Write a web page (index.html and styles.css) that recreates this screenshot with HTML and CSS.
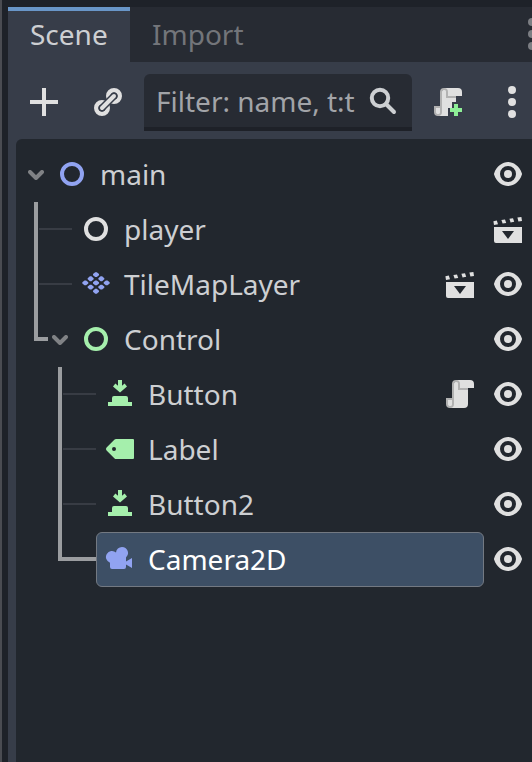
FILE: index.html
```html
<!DOCTYPE html>
<html lang="en">
<head>
<meta charset="utf-8">
<title>Scene</title>
<link rel="stylesheet" href="styles.css">
</head>
<body>
<svg class="defs" aria-hidden="true">
  <symbol id="eye" viewBox="0 0 16 16"><path fill="#e0e0e0" d="M8 2C5.443 2 2.209 3.948 1.045 7.705a1 1 0 0 0-.006.572C2.163 12.211 5.5 14 8 14s5.836-1.789 6.961-5.723a1 1 0 0 0 0-.555C13.861 3.935 10.557 2 8 2zm0 2a4 4 0 0 1 4 4 4 4 0 0 1-4 4 4 4 0 0 1-4-4 4 4 0 0 1 4-4zm0 2a2 2 0 0 0-2 2 2 2 0 0 0 2 2 2 2 0 0 0 2-2 2 2 0 0 0-2-2z"/></symbol>
  <symbol id="ring" viewBox="0 0 16 16"><circle cx="8" cy="8" r="5" fill="none" stroke="currentColor" stroke-width="2"/></symbol>
  <symbol id="clap" viewBox="0 0 16 16"><path fill="#e0e0e0" fill-rule="evenodd" d="M1 7h14v8H2a1 1 0 0 1-1-1zM5 9l3 4 3-4zM.7 4.1l1.7-.3.6 1.8L1 6zM4.7 3.5l1.8-.3.6 1.8-1.8.3zM8.7 2.9l1.8-.3.6 1.8-1.8.3zM12.7 2.3l2-.3.3 2-1.8.2z"/></symbol>
  <symbol id="script" viewBox="0 0 16 16"><path fill="#e0e0e0" d="M6 1v1a1 1 0 0 0-1 1v10H4v-2H2v2a2 2 0 0 0 1 2h7a2 2 0 0 0 2-2V5h3V3a2 2 0 0 0-2-2z"/><path fill="#b2b2b2" fill-rule="evenodd" d="M6 1a2 2 0 0 0-2 2v7H1v3a2 2 0 0 0 4 0V3a1 1 0 0 1 2 0v3h5V5H8V3a2 2 0 0 0-2-2zM2 11h2v2a1 1 0 0 1-2 0z"/><path fill="#e0e0e0" d="M2 11h2v2a1 1 0 0 1-2 0zM5 3a1 1 0 0 1 2 0v3H5z"/></symbol>
  <symbol id="button" viewBox="0 0 16 16"><path fill="#a5efac" d="M2 14v-2h2v-2a1 1 0 0 1 1-1h6a1 1 0 0 1 1 1v2h2v2zM7 1h2v2.900l1.300-1.200 1.200 1.600L8 7.200 4.500 4.300l1.200-1.600L7 3.900z"/></symbol>
  <symbol id="chevron" viewBox="0 0 16 10"><path d="M2 2l6 6 6-6" fill="none" stroke="#808285" stroke-width="4" stroke-linecap="round" stroke-linejoin="round"/></symbol>
</svg>

<div class="dock">
  <header class="tabs">
    <div class="tab active">Scene</div>
    <div class="tab">Import</div>
    <svg class="tabmenu" viewBox="0 0 8 32" fill="#7c7e83"><circle cx="4" cy="4" r="4"/><circle cx="4" cy="16" r="4"/><circle cx="4" cy="28" r="4"/></svg>
  </header>

  <div class="panel">
    <div class="toolbar">
      <svg class="icon" viewBox="0 0 16 16"><path fill="#e0e0e0" d="M7 1h2v6h6v2H9v6H7V9H1V7h6z"/></svg>
      <svg class="icon link" viewBox="0 0 16 16" fill="none"><g stroke="#e0e0e0" stroke-width="2.200"><circle cx="5" cy="11" r="2.900"/><circle cx="11" cy="5" r="2.900"/></g><path class="gap" d="M5 11l6-6"/><path d="M5 11l6-6" stroke="#e0e0e0" stroke-width="2" stroke-linecap="round"/></svg>
      <div class="filter">
        <span>Filter: name, t:t</span>
        <svg class="icon" viewBox="0 0 16 16" fill="none" stroke="#cdcfd2" stroke-width="2"><circle cx="6" cy="6" r="4.100"/><path d="M9 9l4 4" stroke-linecap="round"/></svg>
      </div>
      <svg class="icon attach" viewBox="0 0 16 16"><use href="#script"/><path class="cutout" d="M10 8h6v8h-6v-1H8v-4h2z"/><path fill="#8eef97" d="M11 9h2v2h2v2h-2v2h-2v-2H9v-2h2z"/></svg>
      <svg class="icon more" viewBox="0 0 16 16" fill="#e0e0e0"><circle cx="8" cy="2" r="2"/><circle cx="8" cy="8" r="2"/><circle cx="8" cy="14" r="2"/></svg>
    </div>

    <main class="tree">
      <div class="row root">
        <svg class="chevron"><use href="#chevron"/></svg>
        <svg class="icon blue"><use href="#ring"/></svg><span class="name">main</span>
        <svg class="icon"><use href="#eye"/></svg>
      </div>
      <div class="children outer">
        <div class="guide"></div>
        <div class="rows">
          <div class="row">
            <i class="branch"></i>
            <svg class="icon white"><use href="#ring"/></svg><span class="name">player</span>
            <svg class="icon"><use href="#clap"/></svg>
          </div>
          <div class="row">
            <i class="branch"></i>
            <svg class="icon blue" viewBox="0 0 16 16" fill="currentColor"><g id="tiles"><path id="tile" d="M7.600 2.100h.8l1.100.9v.6l-1.100.9h-.8l-1.100-.9V3z"/><use href="#tile" x="2.67" y="2.08"/><use href="#tile" x="5.34" y="4.16"/></g><use href="#tiles" x="-2.67" y="2.08"/><use href="#tiles" x="-5.34" y="4.16"/></svg><span class="name">TileMapLayer</span>
            <svg class="icon"><use href="#clap"/></svg>
            <svg class="icon"><use href="#eye"/></svg>
          </div>
          <div class="row parent">
            <svg class="chevron"><use href="#chevron"/></svg>
            <svg class="icon green"><use href="#ring"/></svg><span class="name">Control</span>
            <svg class="icon"><use href="#eye"/></svg>
          </div>
          <div class="children inner">
            <div class="guide"></div>
            <div class="rows">
              <div class="row">
                <i class="branch"></i>
                <svg class="icon"><use href="#button"/></svg><span class="name">Button</span>
                <svg class="icon"><use href="#script"/></svg>
                <svg class="icon"><use href="#eye"/></svg>
              </div>
              <div class="row">
                <i class="branch"></i>
                <svg class="icon" viewBox="0 0 16 16"><path fill="#a5efac" fill-rule="evenodd" d="M6 3a1 1 0 0 0-.707.293l-4 4a1 1 0 0 0 0 1.414l4 4A1 1 0 0 0 6 13h8.500a.5.5 0 0 0 .5-.5v-9a.5.5 0 0 0-.5-.5zM5 7a1 1 0 0 1 0 2 1 1 0 0 1 0-2z"/></svg><span class="name">Label</span>
                <svg class="icon"><use href="#eye"/></svg>
              </div>
              <div class="row">
                <i class="branch"></i>
                <svg class="icon"><use href="#button"/></svg><span class="name">Button2</span>
                <svg class="icon"><use href="#eye"/></svg>
              </div>
              <div class="row">
                <div class="selected">
                  <svg class="icon blue" viewBox="0 0 16 16"><path fill="currentColor" d="M9 2a3 3 0 0 0-3 2.777 3 3 0 1 0-3 5.047V12a1 1 0 0 0 1 1h6a1 1 0 0 0 1-1v-1.300l3 1.800v-5l-3 1.800V7.230A3 3 0 0 0 9 2z"/></svg><span class="name">Camera2D</span>
                </div>
                <svg class="icon"><use href="#eye"/></svg>
              </div>
            </div>
          </div>
        </div>
      </div>
    </main>
  </div>
</div>
</body>
</html>
```
FILE: styles.css
```css
* { box-sizing: border-box; }

body {
  margin: 0;
  width: 532px;
  height: 762px;
  overflow: hidden;
  background: #1e2229;
  color: #cdcfd2;
  font: 28px/38px "Noto Sans", sans-serif;
}

svg { display: block; flex: none; }
.defs { display: none; }

.dock {
  display: flex;
  flex-direction: column;
  height: 762px;
  padding: 7px 0 0 6px;
  border-left: 2px solid #4a4c52;
}

.tabs {
  display: flex;
  height: 55px;
  background: #272b33;
  overflow: hidden;
}

.tab {
  padding: 8px 22px 0;
  color: #73757a;
}

.tab.active {
  width: 122px;
  padding-top: 4px;
  border-top: 4px solid #6996c8;
  background: #373d49;
  color: #cdcfd2;
}

.tabmenu {
  width: 8px;
  height: 32px;
  margin: 11px -4px 0 auto;
}

.panel {
  display: flex;
  flex: 1;
  flex-direction: column;
  background: #373d49;
}

.toolbar {
  display: flex;
  align-items: flex-start;
  height: 77px;
  padding: 12px 4px 0 20px;
}

.icon { width: 32px; height: 32px; }
.toolbar > .icon { margin-top: 12px; }
.toolbar > .link { margin-left: 32px; }
.toolbar > .attach { margin-left: 20px; }
.toolbar > .more { margin-left: auto; }
.gap { stroke: #373d49; stroke-width: 3.5; stroke-linecap: round; }
.cutout { fill: #373d49; }

.filter {
  display: flex;
  justify-content: space-between;
  width: 268px;
  height: 57px;
  margin-left: 20px;
  padding: 8px 12px 0;
  border-bottom: 4px solid #1e2128;
  border-radius: 6px 6px 0 0;
  background: #272b33;
  color: #a2a4a8;
  white-space: nowrap;
}

.filter .icon { margin-top: 4px; }

.tree {
  flex: 1;
  margin-left: 8px;
  padding-top: 8px;
  border-top-left-radius: 6px;
  background: #22272e;
}

.row {
  display: flex;
  align-items: flex-start;
  height: 55px;
  padding-right: 8px;
}

.row > .icon { margin: 11px 0 0 16px; }
.row > .branch + .icon { margin-left: 8px; }
.chevron { width: 16px; height: 10px; margin-top: 23px; }
.row > .chevron + .icon { margin-left: 12px; }
.root { padding-left: 12px; }
.parent { padding-left: 4px; }

.name {
  flex: 1;
  padding: 8px 0 0 12px;
  white-space: nowrap;
}

.children { display: flex; }
.rows { flex: 1; }
.outer { padding-left: 18px; }
.inner { padding-left: 10px; }

.guide {
  border: solid #9b9da0;
  border-width: 0 0 4px 4px;
}

.outer > .guide { width: 14px; height: 139px; }
.inner > .guide { width: 38px; height: 194px; }

.branch {
  width: 33px;
  height: 2px;
  margin: 26px 0 0 -9px;
  background: #383c44;
}

.inner .branch { margin-left: -33px; }

.selected {
  display: flex;
  flex: 1;
  height: 55px;
  margin-right: -8px;
  padding: 10px 0 0 7px;
  border: 1px solid #737982;
  border-radius: 6px;
  background: #3d4f65;
  color: #fff;
}

.selected .name { padding-top: 7px; margin-top: -10px; }

.blue { color: #91a3f1; }
.white { color: #e0e0e0; }
.green { color: #a5efac; }
```
